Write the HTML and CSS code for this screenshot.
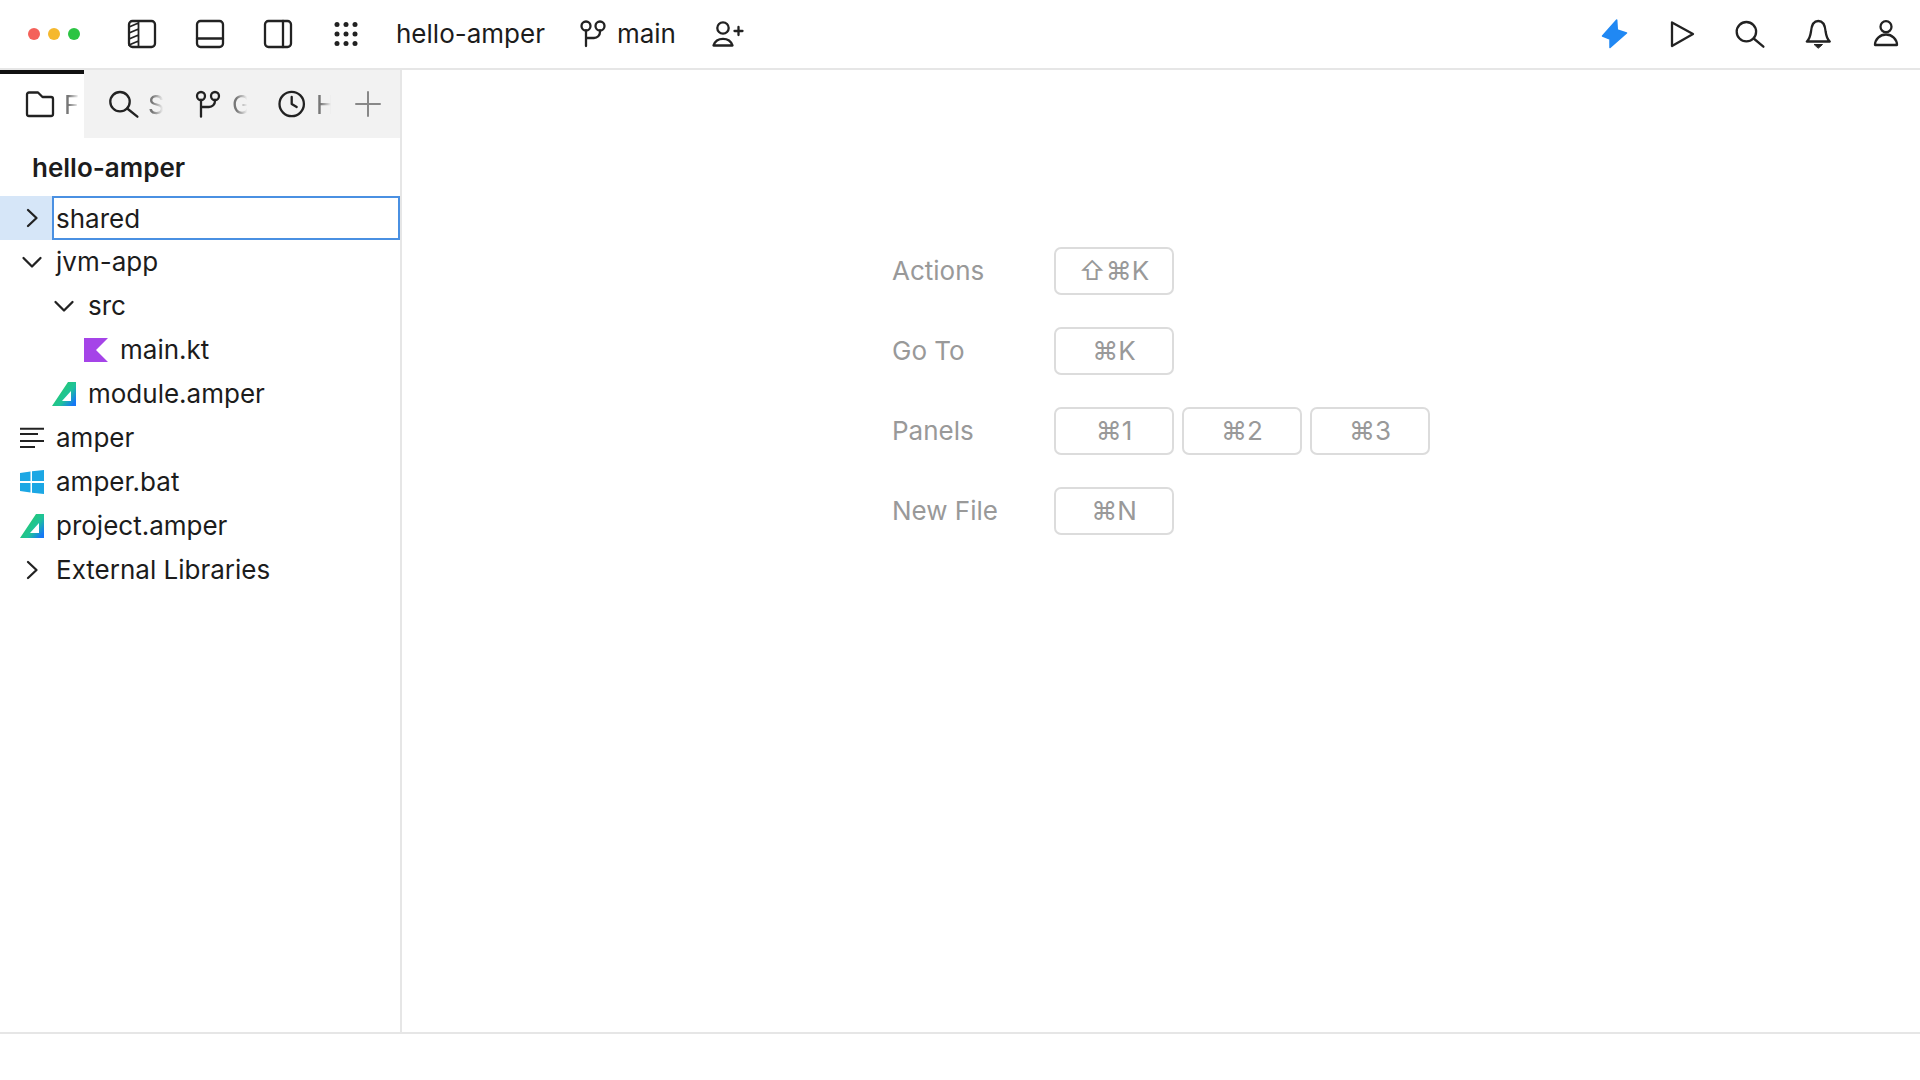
FILE: index.html
```html
<!DOCTYPE html>
<html lang="en">
<head>
<meta charset="utf-8">
<title>hello-amper</title>
<link rel="stylesheet" href="styles.css">
</head>
<body>
<div class="app">
  <header class="topbar">
    <div class="dots"><span class="dot red"></span><span class="dot yellow"></span><span class="dot green"></span></div>
    <div class="tools left-tools">
      <svg class="ico" viewBox="0 0 40 40"><rect x="7" y="7" width="26" height="26" rx="3.5"/><path d="M16.5 7v26M7 13l9.5-4M7 19l9.5-4M7 25l9.5-4M7 31l9.5-4" class="thin"/></svg>
      <svg class="ico" viewBox="0 0 40 40"><rect x="7" y="7" width="26" height="26" rx="3.5"/><path d="M7 24.5h26"/></svg>
      <svg class="ico" viewBox="0 0 40 40"><rect x="7" y="7" width="26" height="26" rx="3.5"/><path d="M25 7v26"/></svg>
      <svg class="ico fillico" viewBox="0 0 40 40"><circle cx="11" cy="10.5" r="2.5"/><circle cx="20" cy="10.5" r="2.5"/><circle cx="29" cy="10.5" r="2.5"/><circle cx="11" cy="20" r="2.5"/><circle cx="20" cy="20" r="2.5"/><circle cx="29" cy="20" r="2.5"/><circle cx="11" cy="29.5" r="2.5"/><circle cx="20" cy="29.5" r="2.5"/><circle cx="29" cy="29.5" r="2.5"/></svg>
    </div>
    <span class="project">hello-amper</span>
    <svg class="ico-branch" viewBox="0 0 32 32"><circle cx="9" cy="8" r="4.5"/><circle cx="23" cy="8" r="4.5"/><path d="M9 12.5V28M23 12.5v1.5a6 6 0 0 1-6 6H9"/></svg>
    <span class="branch">main</span>
    <svg class="ico-adduser" viewBox="0 0 36 36"><circle cx="13" cy="12" r="5.7"/><path d="M3.5 29.5a10 9.5 0 0 1 19 0z"/><path d="M24.5 15h8M28.5 11v8"/></svg>
    <div class="tools right-tools">
      <svg class="ico" viewBox="0 0 40 40"><path class="bolt" d="M8.5 22 22.7 6 23.3 16 32.5 19 16 33.5 16 25z"/></svg>
      <svg class="ico" viewBox="0 0 40 40"><path d="M10 8.5 31 20 10 32z"/></svg>
      <svg class="ico" viewBox="0 0 40 40"><circle cx="16.4" cy="17.7" r="9.7"/><path d="M23.7 24.5 33.4 32.7"/></svg>
      <svg class="ico" viewBox="0 0 40 40"><path d="M8.8 27.5H31.8C29.5 25.5 28.3 22.5 27.6 17.5 27 10.5 24 7 20.3 7S13.6 10.5 13 17.5C12.3 22.5 11.1 25.5 8.8 27.5z"/><path class="clapper" d="M16.5 30.5h8L20.5 34z"/></svg>
      <svg class="ico" viewBox="0 0 40 40"><circle cx="20" cy="12.7" r="5.5"/><path d="M9 31a11 10.5 0 0 1 22 0z"/></svg>
    </div>
  </header>

  <div class="workspace">
    <aside class="sidebar">
      <nav class="tabs">
        <div class="tab active">
          <svg class="tab-ico" viewBox="0 0 30 30"><path d="M2 5.5a2 2 0 0 1 2-2h9l4.5 4.5H26a2 2 0 0 1 2 2V25a2 2 0 0 1-2 2H4a2 2 0 0 1-2-2z"/></svg>
          <span class="tab-label">Files</span>
        </div>
        <div class="tab">
          <svg class="tab-ico" viewBox="0 0 30 30"><circle cx="11" cy="12.7" r="9.7"/><path d="M18.2 19.5 28.4 27.7"/></svg>
          <span class="tab-label">Search</span>
        </div>
        <div class="tab">
          <svg class="tab-ico" viewBox="0 0 30 30"><circle cx="8" cy="7" r="4"/><circle cx="22" cy="7" r="4"/><path d="M8 11V27.7M22 11v1a6 6 0 0 1-6 6H8"/></svg>
          <span class="tab-label">Git</span>
        </div>
        <div class="tab">
          <svg class="tab-ico" viewBox="0 0 30 30"><circle cx="14.7" cy="15" r="12.2"/><path d="M14.7 8v7l5 3"/></svg>
          <span class="tab-label">History</span>
        </div>
        <div class="tab-add">
          <svg class="add-ico" viewBox="0 0 30 30"><path d="M15 3v24M3 15h24"/></svg>
        </div>
      </nav>
      <div class="tree-title">hello-amper</div>
      <ul class="tree">
        <li class="row selected">
          <span class="slot"><svg class="chev" viewBox="0 0 24 24"><path d="M8 4l8.5 8L8 20"/></svg></span>
          <span class="rename">shared</span>
        </li>
        <li class="row">
          <span class="slot"><svg class="chev" viewBox="0 0 24 24"><path d="M3.5 8 12 16.5 20.5 8"/></svg></span>
          <span class="name">jvm-app</span>
        </li>
        <li class="row d1">
          <span class="slot"><svg class="chev" viewBox="0 0 24 24"><path d="M3.5 8 12 16.5 20.5 8"/></svg></span>
          <span class="name">src</span>
        </li>
        <li class="row d2">
          <span class="slot"><svg class="file" viewBox="0 0 24 24"><path fill="#a544e8" d="M0 0H24L12 12 24 24H0z"/></svg></span>
          <span class="name">main.kt</span>
        </li>
        <li class="row d1">
          <span class="slot"><svg class="file" viewBox="0 0 24 24"><defs><linearGradient id="amp1" x1="0.15" y1="0.3" x2="1" y2="0.95"><stop offset="0" stop-color="#25c96a"/><stop offset="0.5" stop-color="#1fc39a"/><stop offset="0.9" stop-color="#1578f5"/></linearGradient></defs><path fill="url(#amp1)" fill-rule="evenodd" d="M16 0H24V24H0zM19 9 10 19H19z"/></svg></span>
          <span class="name">module.amper</span>
        </li>
        <li class="row">
          <span class="slot"><svg class="file lines" viewBox="0 0 24 24"><path d="M0 2.7H24M0 8H18M0 15H24M0 21H15"/></svg></span>
          <span class="name">amper</span>
        </li>
        <li class="row">
          <span class="slot"><svg class="file" viewBox="0 0 24 24"><path fill="#1ca7e4" d="M0 3 10.5 1.5V11H0zM12 1.2 24 0V11H12zM0 13H10.5V22.5L0 21zM12 13H24V24L12 22.8z"/></svg></span>
          <span class="name">amper.bat</span>
        </li>
        <li class="row">
          <span class="slot"><svg class="file" viewBox="0 0 24 24"><path fill="url(#amp1)" fill-rule="evenodd" d="M16 0H24V24H0zM19 9 10 19H19z"/></svg></span>
          <span class="name">project.amper</span>
        </li>
        <li class="row">
          <span class="slot"><svg class="chev" viewBox="0 0 24 24"><path d="M8 4l8.5 8L8 20"/></svg></span>
          <span class="name">External Libraries</span>
        </li>
      </ul>
    </aside>
    <main class="editor">
      <div class="shortcuts">
        <div class="sc-row"><span class="sc-label">Actions</span><span class="key">⇧⌘K</span></div>
        <div class="sc-row"><span class="sc-label">Go To</span><span class="key">⌘K</span></div>
        <div class="sc-row"><span class="sc-label">Panels</span><span class="key">⌘1</span><span class="key">⌘2</span><span class="key">⌘3</span></div>
        <div class="sc-row"><span class="sc-label">New File</span><span class="key">⌘N</span></div>
      </div>
    </main>
  </div>
  <footer class="statusbar"></footer>
</div>
</body>
</html>
```
FILE: styles.css
```css
* { box-sizing: border-box; }
html, body { margin: 0; height: 100%; background: #fff; }
body { font-family: Inter, "Noto Sans", sans-serif; font-size: 26px; color: #1c1c1c; overflow: hidden; }
.app { display: flex; flex-direction: column; height: 1080px; }

.topbar { display: flex; align-items: center; height: 70px; flex: none; border-bottom: 2px solid #e6e6e6; padding-left: 28px; padding-right: 14px; }
.dots { display: flex; gap: 8px; }
.dot { width: 12px; height: 12px; border-radius: 50%; }
.red { background: #f4615a; }
.yellow { background: #f5b82e; }
.green { background: #2cc443; }

.tools { display: flex; gap: 28px; }
.left-tools { margin-left: 42px; }
.right-tools { margin-left: auto; }
.ico, .ico-branch, .ico-adduser, .tab-ico, .add-ico, .chev, .lines { fill: none; stroke: #222; stroke-width: 2.3; stroke-linejoin: round; stroke-linecap: round; }
.ico { width: 40px; height: 40px; flex: none; }
.ico .thin { stroke-width: 1.8; }
.fillico { fill: #222; stroke: none; }
.ico .bolt { fill: #2088f3; stroke: #2088f3; stroke-width: 1.5; }
.ico .clapper { fill: #222; stroke: #222; stroke-width: 1; }

.project { margin-left: 30px; padding-bottom: 1px; }
.ico-branch { width: 32px; height: 32px; margin-left: 32px; flex: none; }
.branch { margin-left: 8px; padding-bottom: 1px; }
.ico-adduser { width: 36px; height: 36px; margin-left: 34px; flex: none; }

.workspace { flex: 1; display: flex; min-height: 0; border-bottom: 2px solid #e6e6e6; }
.sidebar { width: 402px; flex: none; border-right: 2px solid #e6e6e6; }

.tabs { display: flex; height: 68px; background: #f2f2f2; }
.tab { width: 84px; flex: none; display: flex; align-items: center; padding-left: 25px; gap: 9px; overflow: hidden; }
.tab.active { background: #fff; box-shadow: inset 0 4px 0 #111; }
.tab-ico { width: 30px; height: 30px; flex: none; overflow: visible; }
.tab-label { color: #777; width: 18px; flex: none; overflow: hidden; white-space: nowrap; -webkit-mask-image: linear-gradient(to right, #000 25%, transparent 85%); mask-image: linear-gradient(to right, #000 25%, transparent 85%); }
.tab-add { flex: 1; display: flex; align-items: center; justify-content: center; }
.add-ico { width: 30px; height: 30px; stroke: #888; stroke-width: 2; }

.tree-title { height: 58px; padding: 14px 0 0 32px; font-weight: 600; line-height: 32px; }
.tree { list-style: none; margin: 0; padding: 0; }
.row { display: flex; align-items: center; height: 44px; padding-left: 20px; gap: 12px; white-space: nowrap; }
.row.d1 { padding-left: 52px; }
.row.d2 { padding-left: 84px; }
.slot { width: 24px; height: 24px; flex: none; display: flex; }
.name { padding-bottom: 1px; }
.chev, .file { width: 24px; height: 24px; overflow: visible; }
.lines { stroke-width: 2; stroke-linecap: butt; }
.row.selected { background: #d6e6f8; gap: 8px; position: relative; }
.rename { flex: 1; align-self: stretch; display: flex; align-items: center; background: #fff; border: 2px solid #4a90e2; padding-left: 2px; }

.editor { flex: 1; display: flex; justify-content: center; align-items: flex-start; padding-top: 177px; }
.shortcuts { display: flex; flex-direction: column; gap: 32px; width: 538px; }
.sc-row { display: flex; align-items: center; gap: 8px; }
.sc-label { width: 154px; flex: none; color: #999; padding-bottom: 1px; }
.key { width: 120px; height: 48px; display: flex; align-items: center; justify-content: center; border: 2px solid #dcdcdc; border-radius: 7px; color: #999; padding-bottom: 1px; }

.statusbar { height: 46px; flex: none; background: #fff; }
```
